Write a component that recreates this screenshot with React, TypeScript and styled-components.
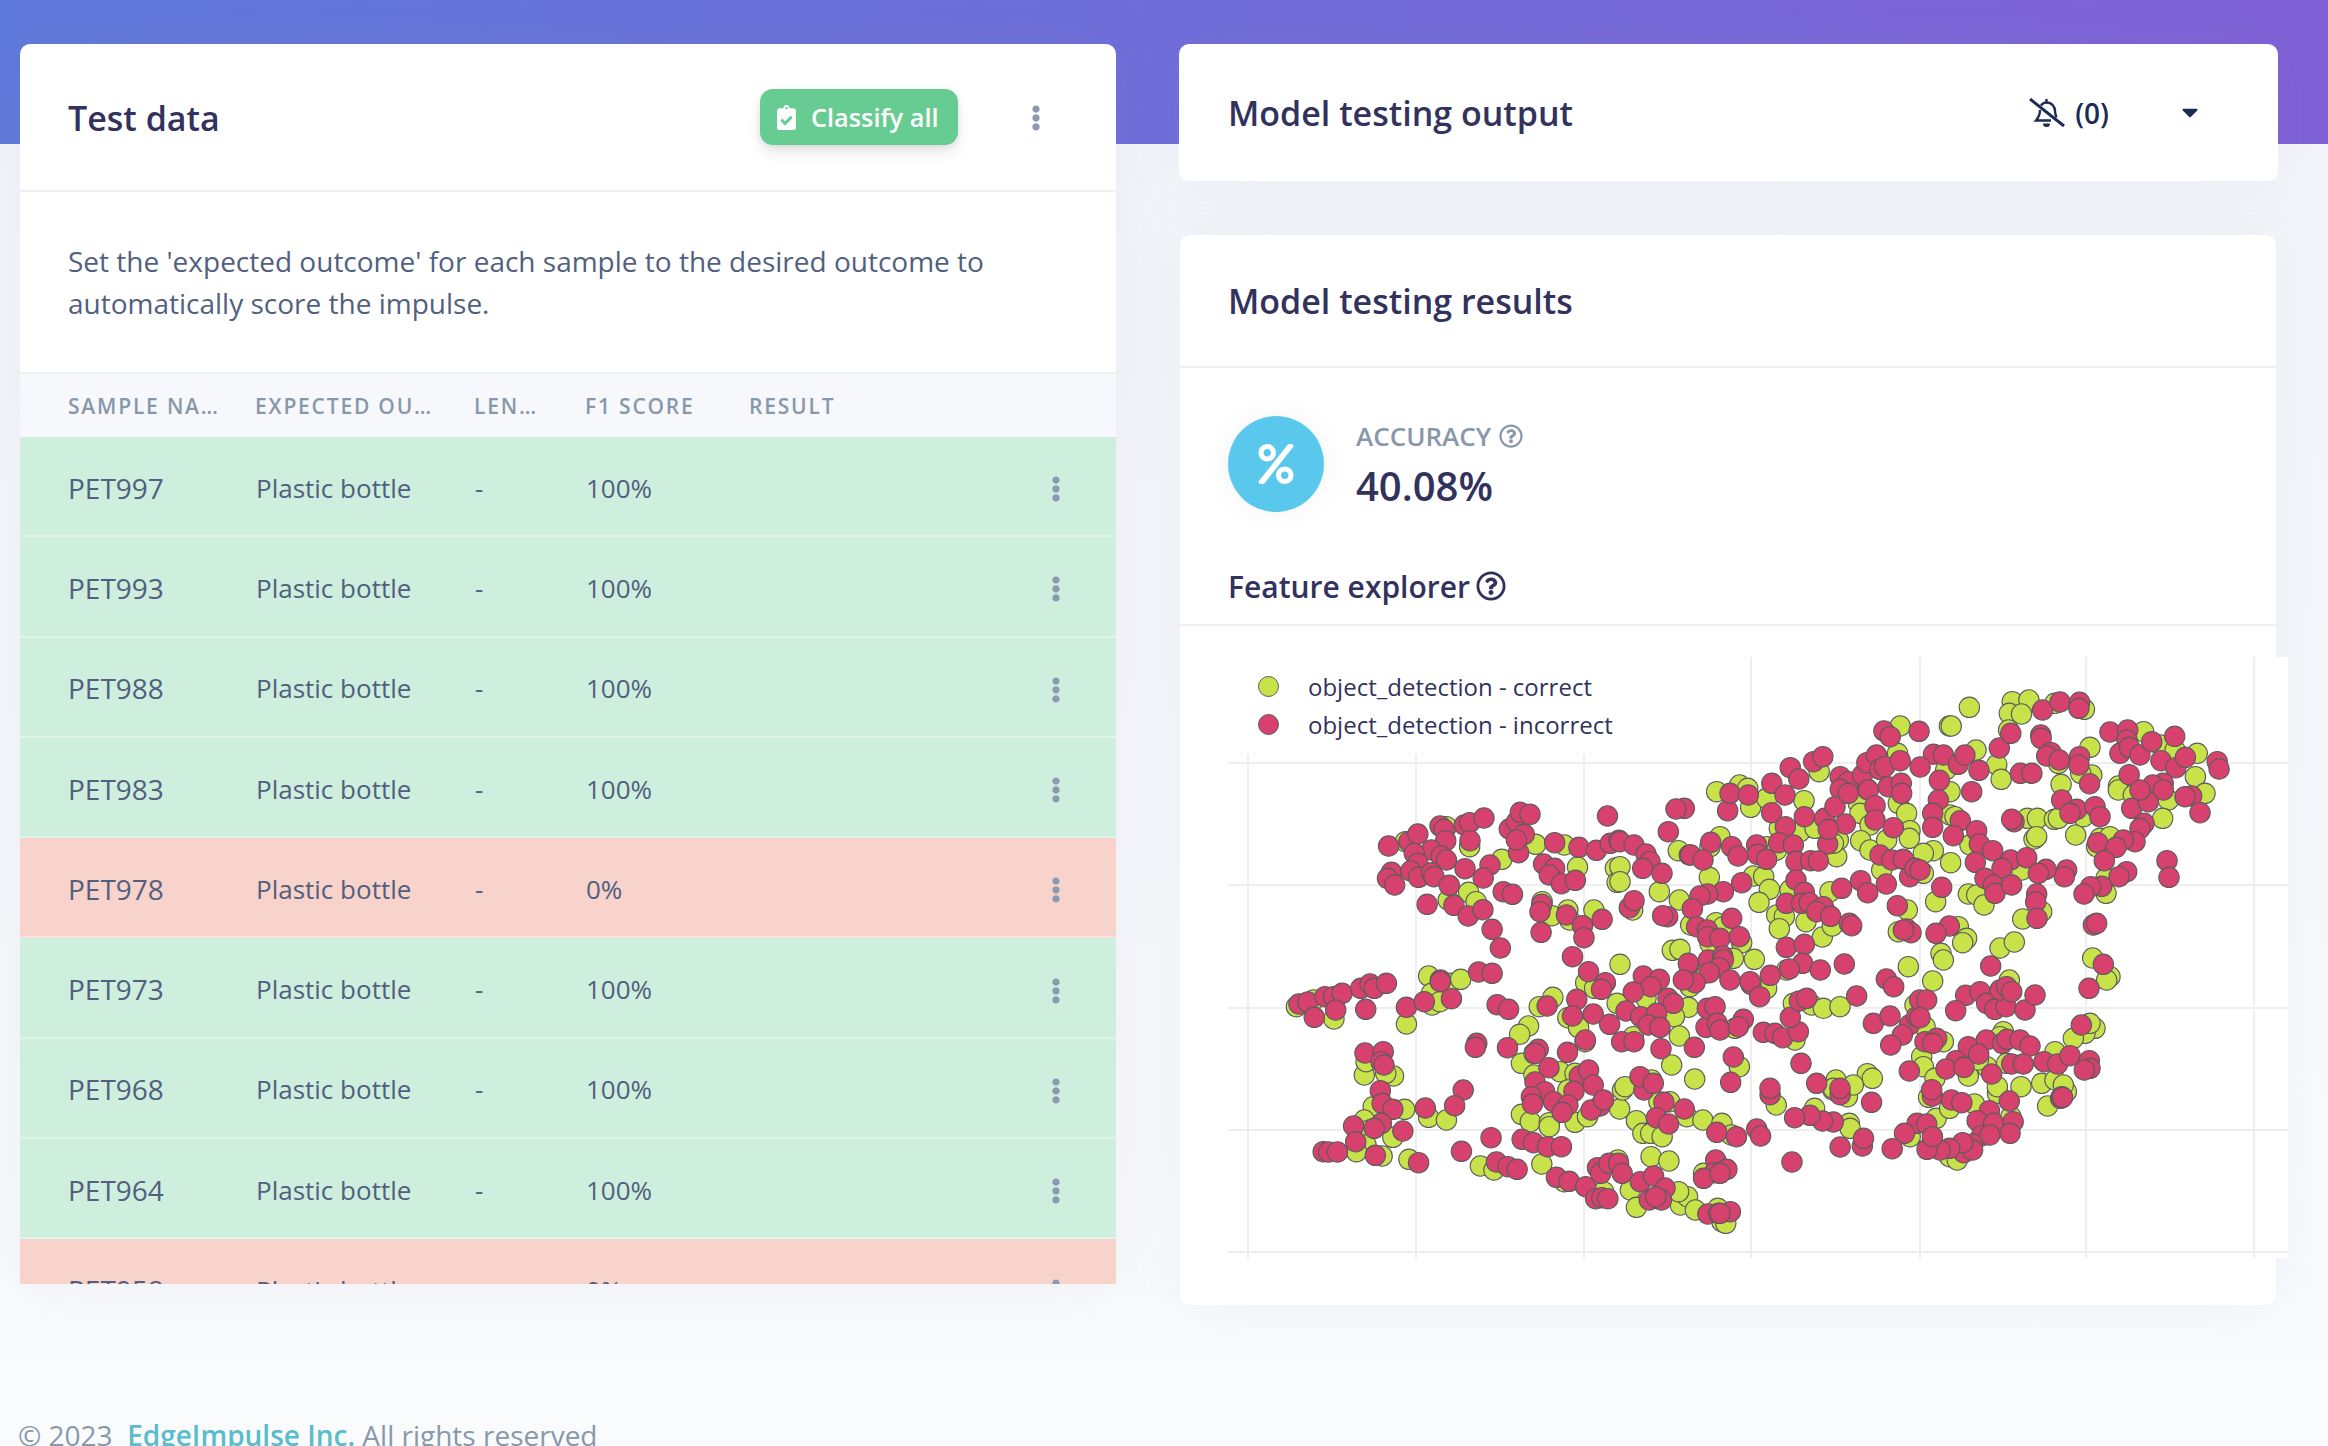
import styled, { createGlobalStyle } from 'styled-components';
import { FaCaretDown, FaClipboardCheck, FaEllipsisV, FaPercent, FaRegQuestionCircle } from 'react-icons/fa';

const GlobalStyle = createGlobalStyle`
  html, body {
    margin: 0;
    padding: 0;
  }
  body {
    font-family: 'Open Sans', 'Liberation Sans', sans-serif;
    color: #32325d;
  }
`;

const Page = styled.div`
  box-sizing: border-box;
  width: 2328px;
  height: 1446px;
  overflow: hidden;
  padding: 44px 50px 0 20px;
  background:
    linear-gradient(87deg, #5f79db 0%, #7f60d7 100%) top / 100% 144px no-repeat,
    linear-gradient(180deg, #f3f4fa 0%, #fafbfd 100%);
`;

const Columns = styled.div`
  display: grid;
  grid-template-columns: 1096px 1099px;
  column-gap: 63px;
  align-items: start;
`;

const Card = styled.section`
  background: #fff;
  border-radius: 10px;
  box-shadow: 0 0 60px rgba(136, 152, 170, 0.1);
`;

const TestCard = styled(Card)`
  height: 1240px;
  overflow: hidden;
  border-radius: 10px 10px 0 0;
`;

const RightColumn = styled.div`
  display: flex;
  flex-direction: column;
  gap: 54px;
`;

const CardHeader = styled.header`
  display: flex;
  align-items: center;
  box-sizing: content-box;
  height: 146px;
  padding: 0 67px 0 48px;
  border-bottom: 2px solid #eff0f3;
`;

const Title = styled.h3`
  margin: 2px 0 0;
  font-size: 34px;
  font-weight: 600;
  line-height: 1.2;
  color: #32325d;
`;

const ClassifyButton = styled.button`
  display: flex;
  align-items: center;
  gap: 12px;
  box-sizing: border-box;
  height: 56px;
  width: 198px;
  margin-left: auto;
  padding: 0 14px;
  border: 0;
  border-radius: 13px;
  background: #66cc91;
  box-shadow: 0 8px 14px rgba(50, 50, 93, 0.1), 0 2px 6px rgba(0, 0, 0, 0.08);
  color: #fff;
  font: 600 25.3px 'Open Sans', sans-serif;
  white-space: nowrap;
`;

const DotsWrap = styled.span<{ $gap?: number }>`
  display: flex;
  margin-top: 2px;
  margin-left: ${(props) => props.$gap ?? 0}px;
  color: #8d99ae;
  font-size: 26px;
`;

const RowDots = styled(DotsWrap)`
  margin-top: 3px;
`;

const Description = styled.p`
  margin: 0;
  padding: 48px 48px 48px;
  font-size: 28px;
  line-height: 42px;
  color: #525f7f;
  border-bottom: 2px solid #eff0f3;
`;

const TableHead = styled.div`
  display: grid;
  grid-template-columns: 187px 219px 111px 164px 1fr;
  align-items: center;
  height: 63px;
  padding-left: 48px;
  background: #f6f8fc;
  color: #8898aa;
  font-size: 21px;
  font-weight: 600;
  letter-spacing: 1.8px;
  white-space: nowrap;
`;

const Row = styled.div<{ $failed: boolean }>`
  display: grid;
  grid-template-columns: 188px 219px 111px 1fr 44px;
  align-items: center;
  box-sizing: border-box;
  height: 100.3px;
  padding: 3px 29px 0 48px;
  background: ${(props) => (props.$failed ? '#f7d3cb' : '#ceefdd')};
  border-bottom: 2px solid ${(props) => (props.$failed ? '#f9e2dc' : '#e0f5ea')};
  color: #525f7f;
  font-size: 26px;
`;

const SampleName = styled.span`
  font-size: 28px;
`;

const OutputHeader = styled.header`
  display: flex;
  align-items: center;
  box-sizing: border-box;
  height: 137px;
  padding: 0 75px 0 49px;
`;

const Alerts = styled.div`
  display: flex;
  align-items: center;
  gap: 10px;
  margin-left: auto;
  color: #1c2b52;
  font-size: 28px;
  font-weight: 600;
`;

const Caret = styled.span`
  display: flex;
  margin-left: 68px;
  margin-top: -2px;
  font-size: 26px;
  color: #1c2b52;
`;

const ResultsHeader = styled.header`
  display: flex;
  align-items: center;
  box-sizing: border-box;
  height: 133px;
  padding: 0 48px;
  border-bottom: 2px solid #eff0f3;
`;

const ResultsCard = styled(Card)`
  width: 1096px;
  margin-left: 1px;
  padding-bottom: 47px;
`;

const Metric = styled.div`
  display: flex;
  align-items: center;
  gap: 32px;
  padding: 48px 48px 0;
`;

const MetricIcon = styled.div`
  display: flex;
  align-items: center;
  justify-content: center;
  width: 96px;
  height: 96px;
  border-radius: 50%;
  background: #5ac8ec;
  box-shadow: 0 0 24px rgba(136, 152, 170, 0.12);
  color: #fff;
  font-size: 40px;
`;

const MetricLabel = styled.div`
  display: flex;
  align-items: center;
  gap: 8px;
  color: #8898aa;
  font-size: 26px;
  font-weight: 600;
  line-height: 36px;
`;

const MetricValue = styled.div`
  margin-top: 8px;
  font-size: 40px;
  font-weight: 600;
  line-height: 48px;
  color: #32325d;
`;

const ExplorerTitle = styled.h4`
  display: flex;
  align-items: center;
  gap: 6px;
  box-sizing: border-box;
  height: 114px;
  margin: 0;
  padding: 36px 48px 0;
  font-size: 30px;
  font-weight: 600;
  color: #32325d;
  border-bottom: 2px solid #eff0f3;
`;

const PlotWrap = styled.div`
  position: relative;
  width: 1108px;
  height: 601px;
  margin-top: 31px;
  background: #fff;
`;

const Legend = styled.ul`
  position: absolute;
  left: 78px;
  top: 10px;
  margin: 0;
  padding: 0;
  list-style: none;
`;

const LegendItem = styled.li`
  display: flex;
  align-items: center;
  gap: 29px;
  height: 38px;
  font-size: 24px;
  color: #32325d;
`;

const Marker = styled.span<{ $color: string }>`
  box-sizing: border-box;
  width: 21px;
  height: 21px;
  border-radius: 50%;
  border: 1.5px solid #5c5c5c;
  background: ${(props) => props.$color};
`;

const Footer = styled.footer`
  margin: 112px 0 0 -2px;
  font-size: 28px;
  line-height: 36px;
  color: #8898aa;
  white-space: pre;
`;

const FooterLink = styled.a`
  color: #5bbccb;
  font-weight: 600;
`;

const LIME = '#c8e34a';
const PINK = '#d6416d';

const samples = [
  ['PET997', '100%'],
  ['PET993', '100%'],
  ['PET988', '100%'],
  ['PET983', '100%'],
  ['PET978', '0%'],
  ['PET973', '100%'],
  ['PET968', '100%'],
  ['PET964', '100%'],
  ['PET958', '0%'],
];

// points were read off crops of the plot, so each list has its own origin and scale.
// the two "fine" crops replace whatever the coarse ones had in the middle of the plot
type Crop = { ox: number; oy: number; sx: number; sy: number; maxX: number; maxY: number; fine?: boolean; lime: string; pink: string };

const crops: Crop[] = [
  {
    ox: 1200, oy: 640, sx: 2.8, sy: 3, maxX: 1720, maxY: 960,
    lime: '575,605 690,560 755,620 845,658 940,613 1020,615 1057,681 1163,684 1168,727 1286,756 1343,780 1338,632 1311,570 1426,710 1456,590 1430,630 752,757 773,785 695,780 958,785 985,827 1030,810 1035,840 1103,810 1190,808 1210,812 1323,930 1340,930 1380,855 1445,855 884,966 1172,973',
    pink: '528,618 585,605 610,582 672,558 683,568 740,555 755,548 795,534 688,602 756,602 648,630 600,640 610,670 675,648 690,660 742,686 812,675 793,714 536,697 525,715 545,735 590,693 612,712 648,698 655,710 698,736 636,793 711,796 751,828 792,809 849,755 875,763 818,868 841,924 892,638 866,567 886,546 897,517 924,523 908,583 886,600 993,608 1061,622 1110,631 1149,610 1173,601 1190,622 1216,615 1249,643 1262,668 1240,686 1294,700 962,672 993,685 978,705 1012,731 1051,721 957,793 952,815 1026,825 1071,857 1075,893 1126,838 955,877 1215,780 1200,803 1141,528 1330,505 1356,505 1311,575 1043,950 1431,606 1373,640 1369,670 1408,660 1378,805 1392,775 1421,762 1365,862 1422,888 1450,895 1296,827 1311,830 1410,950 1370,950',
  },
  {
    ox: 1720, oy: 660, sx: 2.703, sy: 3, maxX: 2400, maxY: 960,
    lime: '53,375 75,385 128,415 82,443 228,420 268,335 480,280 487,198 620,198 625,198 674,142 790,125 835,120 782,160 815,162 780,210 905,130 985,148 692,270 748,314 760,358 610,330 620,393 375,430 375,462 485,432 505,462 540,490 630,460 620,465 403,490 380,543 402,573 448,540 490,545 517,512 512,530 558,580 576,570 623,608 550,640 440,630 680,700 665,703 712,735 583,725 505,750 820,625 1000,262 1005,345 975,340 922,373 915,310 1077,378 1120,400 1145,215 1190,255 1230,270 1290,280 1285,350 1310,395 1212,415 1197,475 1055,520 1025,530 1040,650 1045,700 830,473 855,475 848,537 905,478 915,473 980,470 962,525 1220,597 867,755 820,775 478,815 510,922 357,925 160,805 233,785 170,770 278,830 303,795 92,898 58,845 105,725 132,688 90,650 118,650 300,695 320,588 315,545 205,515 255,505 150,515 4,530 645,795 670,835 655,845 757,863 795,845 598,875 604,898 1007,893 228,825',
    pink: '27,395 78,400 22,452 140,370 177,400 139,456 190,323 213,357 253,305 278,290 228,470 178,500 158,548 197,553 32,560 47,588 100,582 127,597 206,603 245,600 266,604 292,551 283,475 312,437 275,450 340,492 325,350 348,365 325,388 347,395 399,388 385,345 397,308 423,285 432,328 445,320 487,302 443,213 460,230 538,214 455,380 490,370 490,397 420,435 418,485 420,460 468,503 577,283 604,285 541,321 644,313 662,285 700,331 755,264 786,220 593,361 578,410 589,420 681,393 577,460 576,503 650,481 631,527 693,513 700,553 737,572 690,606 784,600 829,594 763,626 716,656 740,677 745,700 787,675 465,600 433,585 493,597 528,628 513,650 449,671 380,663 398,698 330,685 206,660 228,697 180,730 222,735 250,730 265,755 278,742 299,770 350,790 355,795 58,668 12,695 30,775 52,830 178,862 227,852 190,925 223,910 270,929 336,911 479,737 600,682 505,805 517,817 583,820 620,798 731,918 812,340 843,340 867,225 868,235 895,278 883,288 917,300 972,290 970,315 999,371 924,420 965,447 945,460 1015,440 1025,470 793,483 1021,548 1070,560 1090,540 1118,545 1135,505 1147,490 1038,605 1078,650 1098,633 1033,678 1005,680 984,703 1209,604 1214,652 856,705 853,725 857,776 862,638 882,628 931,648 937,630 1010,795 1015,790 1035,912 872,150 919,126 972,127 970,145 1054,216 1102,210 1100,240 1081,280 1107,262 1135,285 1167,245 1229,229 1192,302 1232,323 1258,292 1106,344 1198,370 1170,375 1141,405 1157,427 1113,445 1260,410 1275,407 1297,458 1344,305 1349,327',
  },
  {
    ox: 1200, oy: 960, sx: 2.8, sy: 3, maxX: 1720, maxY: 1400,
    lime: '270,140 318,120 375,177 578,192 640,48 700,70 730,58 648,100 650,135 672,125 950,140 988,112 920,198 895,223 1030,173 1060,203 1078,245 900,310 935,280 935,345 1008,335 1050,340 1030,390 900,463 925,485 978,488 978,500 1050,487 1085,470 1175,447 1183,390 1222,482 1240,520 1262,520 1294,530 1285,425 1315,425 1270,365 1363,470 1408,480 1456,490 1342,228 1320,315 1385,355 1330,168 1368,142 1168,130 1245,110 1080,68 1105,85 1215,240 460,345 465,305 542,348 520,340 485,440 573,448 640,472 690,480 460,480 475,510 540,532 465,555 438,575 510,588 585,598 785,618 823,630 957,612 1020,665 1130,695 1263,590 1313,603 1170,600 1205,690 1222,742 1345,735 1365,710 1340,695 1387,750 1450,745 1410,640',
    pink: '277,132 302,126 320,172 350,110 374,110 398,100 380,150 450,85 476,72 488,85 522,70 464,148 578,142 628,125 673,60 673,65 704,116 780,36 818,40 832,134 864,148 972,138 1055,118 1043,168 1101,162 1147,193 1088,35 1135,68 1124,88 1193,153 1214,98 1243,48 1285,60 1263,82 1311,115 1327,128 1238,170 1279,160 1255,196 1290,203 1422,143 1440,142 1414,202 1450,190 1455,212 1357,62 1385,70 1370,18 1427,40 1455,25 1180,243 1217,245 1079,240 1029,277 947,268 938,280 861,263 775,250 771,262 1291,266 1384,262 462,279 513,275 507,305 515,315 977,323 1062,348 1088,330 1101,375 1047,394 938,366 965,395 928,410 931,432 990,425 1030,435 1014,457 1120,438 1095,450 1130,420 1232,350 1272,376 1243,390 1299,427 1356,447 1278,473 1312,492 1447,517 737,390 713,437 631,444 505,392 510,430 540,448 430,498 508,490 488,505 568,513 436,545 491,586 345,575 360,576 385,576 612,608 732,574 815,533 902,538 934,548 973,560 1012,560 830,606 862,620 888,628 998,652 1034,664 1080,680 1113,623 1122,640 1145,610 1172,610 1182,640 1108,716 1125,713 1142,716 1233,665 1270,648 1302,684 1258,720 1292,720 1276,710 1422,762 1452,760 1444,600 1474,628 1440,638 1410,655',
  },
  {
    ox: 1720, oy: 960, sx: 2.613, sy: 3, maxX: 2400, maxY: 1400,
    lime: '90,5 345,28 492,22 584,5 557,63 757,60 1020,48 1012,60 970,5 510,128 505,150 240,135 270,145 314,140 190,130 245,120 193,240 540,210 525,287 535,310 560,352 650,350 690,305 730,345 750,315 725,400 788,388 840,372 878,362 878,275 925,232 950,220 975,205 963,185 385,341 397,350 350,378 303,362 295,390 333,410 52,320 147,435 247,445 338,490 340,505 497,530 565,475 665,432 600,445 545,412 585,245 735,215 740,215 760,470 900,380 905,395 856,438 5,490 30,525 600,590 620,600 5,785 15,790 40,205 120,85',
    pink: '0,25 27,60 80,70 103,108 132,45 183,25 217,12 263,30 326,15 358,108 436,58 454,80 707,20 964,85 1002,15 641,105 681,95 728,90 745,85 762,93 782,105 823,105 670,135 718,148 750,135 797,150 616,152 540,120 518,170 495,195 475,222 445,255 444,168 401,188 532,243 565,240 550,250 573,255 648,260 696,240 740,250 750,237 785,240 810,258 677,280 616,300 590,325 637,322 652,320 710,342 763,312 795,312 820,305 848,306 882,310 915,286 965,303 968,325 952,330 945,195 495,333 555,408 605,420 632,428 756,423 704,452 672,482 715,490 766,485 758,520 683,528 705,525 660,552 637,578 660,570 634,548 600,565 575,570 541,568 515,490 540,492 482,520 555,530 450,566 372,558 375,535 314,561 296,486 268,483 235,466 195,473 96,507 106,528 43,530 18,628 0,640 188,606 131,404 253,371 314,404 396,427 212,310 34,291 28,366 0,190 62,178 45,198 115,215 140,220 162,232 205,215 184,171 207,122 225,118 27,755 0,760 890,415 893,410 895,412',
  },
  {
    ox: 1620, oy: 790, sx: 3, sy: 3, maxX: 2400, maxY: 1400, fine: true,
    lime: '290,5 392,52 440,25 552,32 300,140 270,170 175,182 268,262 118,305 178,330 400,258 431,260 448,298 417,337 540,125 478,115 585,115 440,170 470,180 650,200 655,150 640,160 715,40 720,70 750,105 722,152 750,180 800,150 835,40 860,70 870,122 868,145 785,240 630,305 510,300 470,375 493,380 478,416 558,395 607,441 637,408 212,405 288,398 310,410 365,458 270,460 157,481 180,478 340,505 403,508 250,550 210,590 0,523 0,230 0,275 38,360 78,625 205,652 163,680 178,738 155,825 224,867 358,830 345,715 440,595 500,540 520,640 575,645 610,655 660,650 525,750 865,530 835,425 862,360 885,645 742,851 757,865 648,870 640,895 700,885 95,870 15,890 40,740',
    pink: '0,155 42,165 78,192 90,215 68,235 126,250 193,55 168,57 145,125 272,157 323,62 330,10 385,15 455,68 495,15 553,80 614,85 645,50 685,10 745,0 765,47 765,90 676,102 820,113 845,10 496,110 476,158 520,165 623,162 625,118 528,214 572,212 595,213 208,195 212,195 249,210 335,170 354,198 410,165 413,193 440,208 365,278 310,305 263,312 240,318 217,356 528,270 553,307 499,340 545,340 568,338 610,350 590,365 632,379 665,295 722,272 743,308 780,195 815,210 850,208 869,260 885,235 799,282 832,347 688,400 695,407 860,417 873,428 850,420 28,353 42,332 143,380 128,377 335,385 230,410 262,420 263,440 300,445 358,440 499,472 553,463 548,520 508,537 601,540 673,522 799,567 821,590 710,618 207,525 205,520 265,510 308,498 310,510 298,533 268,548 225,578 190,570 330,570 393,583 390,575 451,556 419,620 70,558 118,568 92,590 40,606 144,625 160,640 18,663 62,680 110,670 85,705 120,712 258,712 262,655 285,650 292,700 300,720 370,688 355,710 430,727 465,730 488,743 535,725 511,682 538,633 560,625 760,700 810,678 868,705 847,735 812,765 890,680 5,755 42,755 123,776 223,772 340,801 543,820 60,860 100,880 332,877 868,843 590,880 450,895 660,895 899,630',
  },
  {
    ox: 1920, oy: 790, sx: 3, sy: 3, maxX: 2400, maxY: 1400, fine: true,
    lime: '90,5 90,75 105,80 40,182 10,190 92,218 150,165 322,85 352,85 403,88 415,85 342,147 350,140 467,135 490,80 595,0 640,15 745,30 728,85 855,10 540,145 570,140 530,170 305,240 558,265 558,310 47,335 10,250 145,312 170,315 192,345 308,387 365,365 115,410 140,445 128,458 63,490 70,510 240,474 283,456 518,504 570,560 560,570 38,573 268,570 15,710 70,755 5,800 10,830 45,865 145,858 200,830 232,890 250,725 240,740 303,890 365,880 405,870 430,885 405,785 525,715 495,730 510,700 460,745 175,810 260,820',
    pink: '55,30 155,5 38,70 38,112 121,92 100,137 170,122 178,162 218,182 166,217 272,210 320,203 246,235 195,265 220,285 225,310 275,285 282,95 275,88 425,30 470,58 450,70 525,50 540,80 635,55 685,35 660,0 730,0 815,18 795,20 840,68 672,100 660,115 645,155 610,150 533,158 588,172 553,212 741,212 747,262 620,245 597,260 545,289 512,290 492,312 440,240 433,260 378,238 355,250 65,292 0,240 350,312 347,336 351,385 88,408 48,430 520,405 530,400 550,523 212,528 507,595 20,630 0,683 137,616 180,605 107,662 200,640 224,658 258,650 240,600 260,590 275,605 315,660 345,615 484,705 15,755 50,745 38,760 145,770 199,750 247,760 261,748 300,750 330,768 176,792 108,812 78,837 132,832 215,852 275,822 310,822 372,815 413,822 450,797 508,812 510,835 493,840 35,899',
  },
];

const PLOT_X = 1180;
const PLOT_Y = 657;

const inFineArea = (x: number, y: number) => x >= 1620 && x < 2220 && y >= 790 && y < 1090;

const readPoints = (list: 'lime' | 'pink') =>
  crops.flatMap((crop) =>
    crop[list]
      .split(' ')
      .map((pair) => pair.split(',').map(Number))
      .map(([x, y]) => [crop.ox + x / crop.sx, crop.oy + y / crop.sy])
      .filter(([x, y]) => x < crop.maxX && y < crop.maxY && (crop.fine || !inFineArea(x, y)))
      .map(([x, y]) => [x - PLOT_X, y - PLOT_Y]),
  );

const limePoints = readPoints('lime');
const pinkPoints = readPoints('pink');

const verticals = [
  { x: 68, top: 97 },
  { x: 236, top: 97 },
  { x: 404, top: 97 },
  { x: 571, top: 0 },
  { x: 740, top: 0 },
  { x: 906, top: 0 },
  { x: 1074, top: 0 },
];
const horizontals = [106, 228, 351, 473, 595];

const ScatterPlot = () => (
  <svg width="1108" height="601" viewBox="0 0 1108 601">
    {verticals.map((line) => (
      <line key={line.x} x1={line.x} x2={line.x} y1={line.top} y2={601} stroke="#eeeeee" strokeWidth="2" />
    ))}
    {horizontals.map((y) => (
      <line key={y} x1={48} x2={1108} y1={y} y2={y} stroke="#eeeeee" strokeWidth="2" />
    ))}
    {limePoints.map(([x, y], i) => (
      <circle key={`l${i}`} cx={x} cy={y} r="10.2" fill={LIME} stroke="#5c5c5c" strokeWidth="1.1" />
    ))}
    {pinkPoints.map(([x, y], i) => (
      <circle key={`p${i}`} cx={x} cy={y} r="10.2" fill={PINK} stroke="#5c5c5c" strokeWidth="1.1" />
    ))}
  </svg>
);

// muted bell with the long slash through it, as in the output card
const BellMuted = () => (
  <svg width="36" height="30" viewBox="0 0 36 30" fill="none" stroke="currentColor" strokeWidth="2.4">
    <path d="M1 1 L35 28" strokeWidth="3" />
    <path d="M17.5 1 V4.5" />
    <path d="M12 7.5 C13.5 5.4 15.5 4.5 17.5 4.5 C23 4.5 26 9 26 13 C26 16 27 18 27.5 19.5" />
    <path d="M11 12 C11 16 9.5 19.5 7 22.5 H22" />
    <path d="M14 25.5 H21 A3.5 3.5 0 0 1 14 25.5 Z" fill="currentColor" stroke="none" />
  </svg>
);

const App = () => {
  return (
    <Page>
      <GlobalStyle />
      <Columns>
        <TestCard>
          <CardHeader>
            <Title>Test data</Title>
            <ClassifyButton>
              <FaClipboardCheck size={25} />
              Classify all
            </ClassifyButton>
            <DotsWrap $gap={65}>
              <FaEllipsisV />
            </DotsWrap>
          </CardHeader>
          <Description>
            Set the 'expected outcome' for each sample to the desired outcome to automatically score the impulse.
          </Description>
          <TableHead>
            <span>SAMPLE NA…</span>
            <span>EXPECTED OU…</span>
            <span>LEN…</span>
            <span>F1 SCORE</span>
            <span>RESULT</span>
          </TableHead>
          {samples.map(([name, score]) => (
            <Row key={name} $failed={score === '0%'}>
              <SampleName>{name}</SampleName>
              <span>Plastic bottle</span>
              <span>-</span>
              <span>{score}</span>
              <RowDots>
                <FaEllipsisV />
              </RowDots>
            </Row>
          ))}
        </TestCard>
        <RightColumn>
          <Card>
            <OutputHeader>
              <Title>Model testing output</Title>
              <Alerts>
                <BellMuted />
                <span>(0)</span>
              </Alerts>
              <Caret>
                <FaCaretDown />
              </Caret>
            </OutputHeader>
          </Card>
          <ResultsCard>
            <ResultsHeader>
              <Title>Model testing results</Title>
            </ResultsHeader>
            <Metric>
              <MetricIcon>
                <FaPercent />
              </MetricIcon>
              <div>
                <MetricLabel>
                  ACCURACY
                  <FaRegQuestionCircle size={24} />
                </MetricLabel>
                <MetricValue>40.08%</MetricValue>
              </div>
            </Metric>
            <ExplorerTitle>
              Feature explorer
              <FaRegQuestionCircle size={30} />
            </ExplorerTitle>
            <PlotWrap>
              <ScatterPlot />
              <Legend>
                <LegendItem>
                  <Marker $color={LIME} />
                  object_detection - correct
                </LegendItem>
                <LegendItem>
                  <Marker $color={PINK} />
                  object_detection - incorrect
                </LegendItem>
              </Legend>
            </PlotWrap>
          </ResultsCard>
        </RightColumn>
      </Columns>
      <Footer>
        © 2023  <FooterLink>EdgeImpulse Inc.</FooterLink> All rights reserved
      </Footer>
    </Page>
  );
};

export default App;
